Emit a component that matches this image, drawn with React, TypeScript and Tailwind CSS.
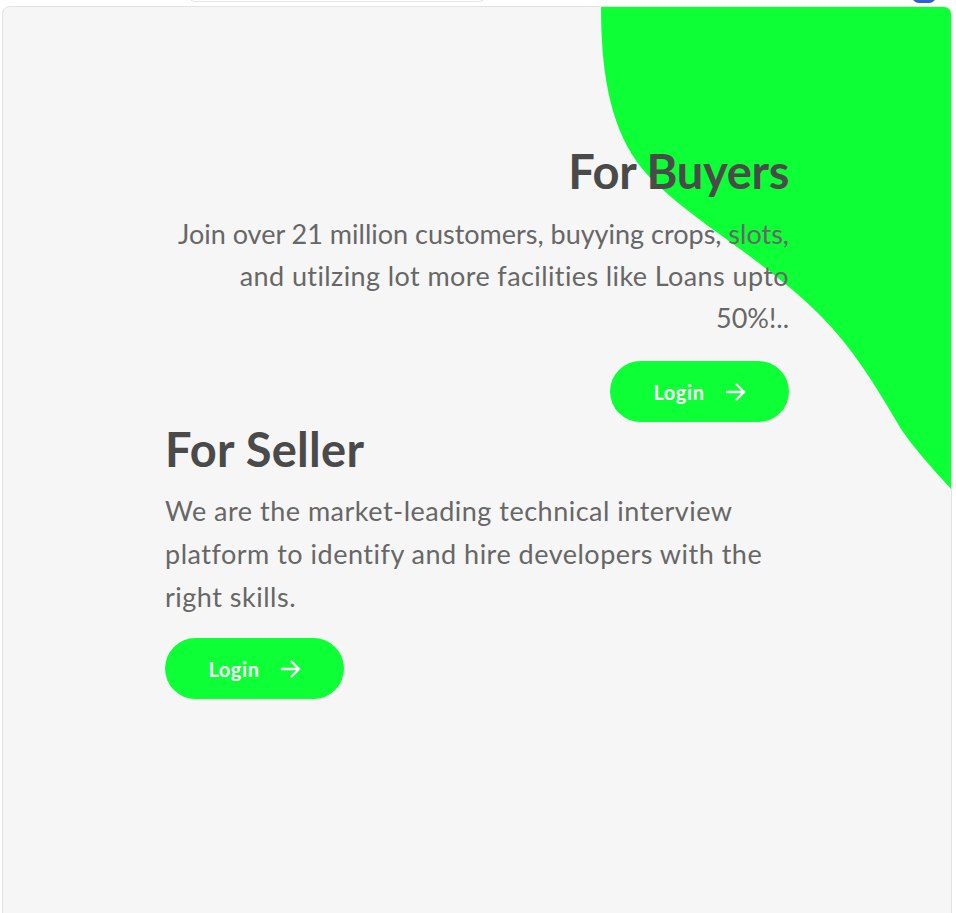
import React from "react";

const Arrow = () => (
  <svg width="24" height="24" viewBox="0 0 24 24" fill="none" stroke="white" strokeWidth="2.4" strokeLinecap="round" strokeLinejoin="round">
    <path d="M3 12h17" />
    <path d="M12.5 4.5 20 12l-7.5 7.5" />
  </svg>
);

const LoginButton = () => (
  <button className="flex h-[61px] w-[179px] items-center justify-center gap-[19px] rounded-full bg-[#0dff36] pl-[2px] text-[20px] font-bold tracking-[0.6px] text-white">
    <span>Login</span>
    <Arrow />
  </button>
);

export default function App() {
  return (
    <div className="relative min-h-[913px] w-[956px] overflow-hidden bg-white" style={{ fontFamily: "Lato, 'Noto Sans', sans-serif" }}>
      <div className="relative h-[6px]">
        <div className="absolute left-[189px] top-[-4px] h-[6px] w-[296px] rounded-b-md border border-[#e4e4e4] bg-white" />
        <div className="absolute left-[912px] top-[-4px] h-[7px] w-[24px] rounded-b-full bg-[#2d5fd6]" />
      </div>
      <div className="relative ml-[2px] h-[940px] w-[950px] overflow-hidden rounded-lg border border-[#e2e2e2] bg-[#f6f6f6]">
        <svg className="absolute right-0 top-0" width="350" height="482" viewBox="0 0 350 482">
          <path d="M0 0 C 0 62, 8 115, 36 155 C 75 208, 170 252, 232 322 C 262 356, 282 392, 300 422 C 312 440, 330 460, 350 482 L 350 0 Z" fill="#0dff36" />
        </svg>
        <div className="relative ml-[162px] w-[624px] pt-[136px]">
          <div className="flex flex-col items-end text-right">
            <h2 className="text-[47px] font-bold leading-[56px] tracking-[-0.3px] text-[#4a4a4a]">For Buyers</h2>
            <p className="mt-[14px] text-[27px] leading-[42px] text-[#676767]">
              Join over 21 million customers, buyying crops, slots,
              <br />
              <span className="tracking-[0.4px]">and utilzing lot more facilities like Loans upto</span>
              <br />
              50%!..
            </p>
            <div className="mt-[22px]">
              <LoginButton />
            </div>
          </div>
          <div className="flex flex-col items-start">
            <h2 className="mt-[-1px] text-[47px] font-bold leading-[56px] tracking-[0.3px] text-[#4a4a4a]">For Seller</h2>
            <p className="mt-[12px] text-[27px] leading-[43px] tracking-[0.5px] text-[#676767]">
              We are the market-leading technical interview
              <br />
              platform to identify and hire developers with the
              <br />
              right skills.
            </p>
            <div className="mt-[20px]">
              <LoginButton />
            </div>
          </div>
        </div>
      </div>
    </div>
  );
}
